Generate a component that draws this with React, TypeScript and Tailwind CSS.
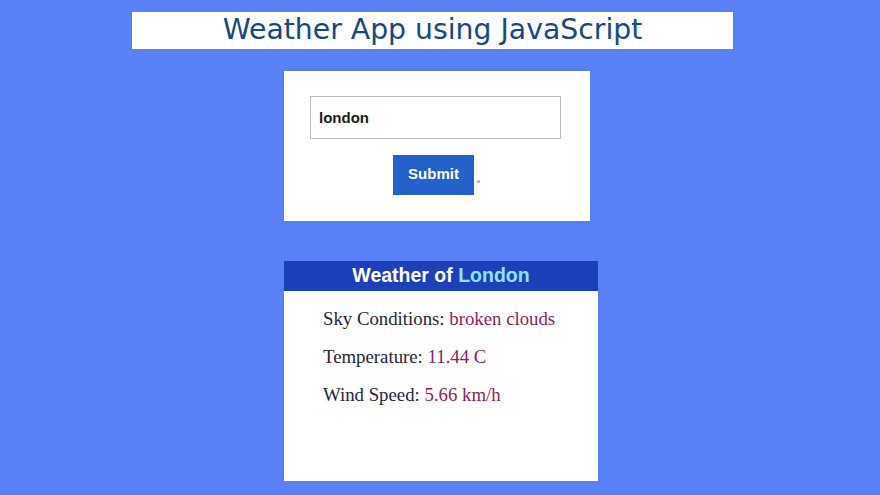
export default function App() {
  return (
    <div className="min-h-[495px] w-[880px] bg-[#5a80f8] flex flex-col items-start pt-3">
      <div className="ml-[132px] w-[601px] h-[37px] bg-white flex items-center justify-center">
        <h1 className="text-[28.3px] leading-none text-[#17497e] font-['DejaVu_Sans',sans-serif]">
          Weather App using JavaScript
        </h1>
      </div>

      <div className="ml-[284px] mt-[22px] w-[306px] h-[150px] bg-white flex flex-col items-center pt-[25px]">
        <input
          type="text"
          defaultValue="london"
          className="w-[251px] h-[43px] mr-[3px] border border-[#bdbdbd] px-[8px] text-[15px] font-bold text-[#1a1a1a] font-['Liberation_Sans',Arial,sans-serif] outline-none"
        />
        <div className="flex items-end mt-[16px] mr-[1px]">
          <button className="w-[81px] h-[40px] bg-[#2461c8] text-white text-[15px] font-bold font-['Liberation_Sans',Arial,sans-serif] pb-[1px]">
            Submit
          </button>
          <span className="ml-[3px] mb-[12px] w-[3px] h-[3px] rounded-full bg-[#b0b0b0]"></span>
        </div>
      </div>

      <div className="ml-[284px] mt-[40px] w-[314px] h-[220px] bg-white flex flex-col">
        <div className="h-[30px] bg-[#1e3fba] flex items-center justify-center font-['Liberation_Sans',Arial,sans-serif] font-bold text-[19.5px] text-white">
          Weather of&nbsp;<span className="text-[#8fe1ff]">London</span>
        </div>
        <div className="pl-[39px] pt-[17px] flex flex-col gap-[16px] font-['Liberation_Serif','Times_New_Roman',serif] text-[18.8px] leading-[22px] text-[#25253a]">
          <p>
            Sky Conditions: <span className="text-[#8a1f63]">broken clouds</span>
          </p>
          <p>
            Temperature: <span className="text-[#8a1f63]">11.44 C</span>
          </p>
          <p>
            Wind Speed: <span className="text-[#8a1f63]">5.66 km/h</span>
          </p>
        </div>
      </div>
    </div>
  );
}
